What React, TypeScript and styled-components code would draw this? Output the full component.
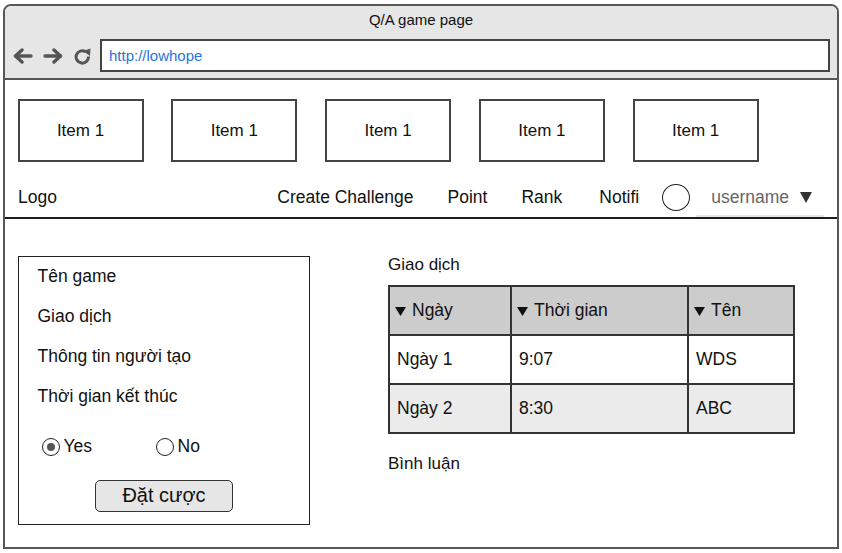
import React from "react";
import styled, { createGlobalStyle } from "styled-components";

const Global = createGlobalStyle`
  * { box-sizing: border-box; }
  html, body { margin: 0; padding: 0; background: #fff; }
  body { font-family: "Liberation Sans", Arial, sans-serif; color: #111; }
`;

const Window = styled.div`
  width: 836px;
  height: 545px;
  margin: 4px 0 0 3px;
  border: 2px solid #575757;
  border-radius: 8px 8px 0 0;
  overflow: hidden;
  display: flex;
  flex-direction: column;
  background: #fff;
`;

const TitleBar = styled.div`
  background: #e6e6e6;
  border-bottom: 2px solid #575757;
  height: 74px;
  padding-top: 6px;
  display: flex;
  flex-direction: column;
`;

const Title = styled.div`
  font-size: 15px;
  line-height: 16px;
  text-align: center;
  color: #111;
`;

const AddressRow = styled.div`
  margin-top: 11px;
  display: flex;
  align-items: center;
  padding: 0 7px 0 8px;
  height: 33px;
`;

const NavIcon = styled.svg<{ $gap: number }>`
  flex: none;
  margin-right: ${(p) => p.$gap}px;
`;

const Address = styled.div`
  flex: 1;
  height: 33px;
  border: 2px solid #454545;
  background: #fff;
  display: flex;
  align-items: center;
  padding-left: 7px;
  font-size: 15px;
  color: #2a72e0;
`;

const Header = styled.div`
  border-bottom: 2px solid #1c1c1c;
  padding: 19px 13px 0 12.5px;
`;

const Items = styled.div`
  display: flex;
  gap: 27.8px;
`;

const ItemBox = styled.div`
  width: 126px;
  height: 63px;
  border: 2px solid #444;
  display: flex;
  align-items: center;
  justify-content: center;
  font-size: 17px;
  padding-top: 1px;
`;

const NavRow = styled.div`
  margin-top: 15px;
  height: 40px;
  display: flex;
  align-items: center;
  font-size: 17.5px;
  padding-top: 1px;
`;

const Logo = styled.div`
  margin-left: 0.5px;
`;

const NavGroup = styled.div`
  margin-left: auto;
  display: flex;
  align-items: center;
  align-self: stretch;
`;

const NavLink = styled.div<{ $gap: number }>`
  margin-right: ${(p) => p.$gap}px;
  white-space: nowrap;
`;

const Avatar = styled.div`
  width: 28px;
  height: 27px;
  border-radius: 50%;
  border: 1.5px solid #222;
  margin-right: 6px;
`;

const UserBlock = styled.div`
  align-self: stretch;
  display: flex;
  align-items: center;
  padding: 2px 12px 0 15px;
  border-bottom: 2px solid #e8e8e8;
  color: #666;
  gap: 11px;
`;

const Caret = styled.svg`
  flex: none;
`;

const Main = styled.div`
  display: flex;
  align-items: flex-start;
  padding: 37px 0 0 13px;
`;

const Panel = styled.div`
  width: 292px;
  height: 269px;
  border: 1.5px solid #222;
  padding: 6.5px 0 0 18.5px;
  display: flex;
  flex-direction: column;
`;

const PanelLabel = styled.div`
  font-size: 17.5px;
  line-height: 24px;
  margin-bottom: 16px;
`;

const RadioRow = styled.div`
  margin-top: 11px;
  padding-left: 4px;
  display: flex;
  align-items: center;
  height: 24px;
  font-size: 17.5px;
`;

const RadioOption = styled.label<{ $width?: number }>`
  display: flex;
  align-items: center;
  gap: 4px;
  width: ${(p) => (p.$width ? `${p.$width}px` : "auto")};
`;

const RadioCircle = styled.span<{ $checked?: boolean }>`
  width: 18px;
  height: 18px;
  border-radius: 50%;
  border: 1.5px solid #222;
  display: flex;
  align-items: center;
  justify-content: center;
  &::after {
    content: "";
    display: ${(p) => (p.$checked ? "block" : "none")};
    width: 8px;
    height: 8px;
    border-radius: 50%;
    background: #555;
  }
`;

const ButtonRow = styled.div`
  margin-top: 21px;
  margin-left: -18.5px;
  display: flex;
  justify-content: center;
`;

const BetButton = styled.button`
  width: 138px;
  height: 32px;
  border: 1.5px solid #333;
  border-radius: 5px;
  background: #e6e6e6;
  font-family: "Liberation Sans", Arial, sans-serif;
  font-size: 20px;
  color: #111;
  padding: 0;
`;

const Right = styled.div`
  margin-left: 78px;
  display: flex;
  flex-direction: column;
`;

const SectionLabel = styled.div<{ $top: number }>`
  font-size: 17px;
  line-height: 17px;
  margin-top: ${(p) => p.$top}px;
`;

const Grid = styled.div`
  margin-top: 12px;
  display: grid;
  grid-template-columns: 122px 177px 106px;
  border-top: 2px solid #333;
  border-left: 2px solid #333;
  width: 407px;
`;

const Cell = styled.div<{ $bg: string; $head?: boolean }>`
  height: 49px;
  border-right: 2px solid #333;
  border-bottom: 2px solid #333;
  background: ${(p) => p.$bg};
  display: flex;
  align-items: center;
  padding: 0 0 1px ${(p) => (p.$head ? 5 : 7)}px;
  font-size: 17.5px;
  gap: 6px;
`;

const SortIcon = styled.svg`
  flex: none;
  margin-top: 3px;
`;

const BackIcon = ({ flip = false }: { flip?: boolean }) => (
  <NavIcon $gap={10} width="20" height="16" viewBox="0 0 20 16">
    <g
      transform={flip ? "translate(20,0) scale(-1,1)" : undefined}
      fill="none"
      stroke="#555"
      strokeWidth="3.4"
      strokeLinecap="round"
      strokeLinejoin="round"
    >
      <path d="M2.5 8 H18" />
      <path d="M9 2 L2.5 8 L9 14" />
    </g>
  </NavIcon>
);

const ReloadIcon = () => (
  <NavIcon $gap={8} width="19" height="18" viewBox="0 0 19 18">
    <path
      d="M15.5 9.5 A6.2 6.2 0 1 1 12.5 4.6"
      fill="none"
      stroke="#555"
      strokeWidth="3"
      strokeLinecap="butt"
    />
    <polygon points="10,4 17.5,1.5 17,9" fill="#555" />
  </NavIcon>
);

const Sort = () => (
  <SortIcon width="11" height="9" viewBox="0 0 11 9">
    <polygon points="0,0 11,0 5.5,9" fill="#111" />
  </SortIcon>
);

const rows = [
  { bg: "#fff", cells: ["Ngày 1", "9:07", "WDS"] },
  { bg: "#ebebeb", cells: ["Ngày 2", "8:30", "ABC"] },
];

export default function App() {
  return (
    <>
      <Global />
      <Window>
        <TitleBar>
          <Title>Q/A game page</Title>
          <AddressRow>
            <BackIcon />
            <BackIcon flip />
            <ReloadIcon />
            <Address>http://lowhope</Address>
          </AddressRow>
        </TitleBar>
        <Header>
          <Items>
            {Array.from({ length: 5 }).map((_, i) => (
              <ItemBox key={i}>Item 1</ItemBox>
            ))}
          </Items>
          <NavRow>
            <Logo>Logo</Logo>
            <NavGroup>
              <NavLink $gap={34}>Create Challenge</NavLink>
              <NavLink $gap={34}>Point</NavLink>
              <NavLink $gap={37}>Rank</NavLink>
              <NavLink $gap={23}>Notifi</NavLink>
              <Avatar />
              <UserBlock>
                <span>username</span>
                <Caret width="12" height="11" viewBox="0 0 12 11">
                  <polygon points="0,0 12,0 6,11" fill="#333" />
                </Caret>
              </UserBlock>
            </NavGroup>
          </NavRow>
        </Header>
        <Main>
          <Panel>
            <PanelLabel>Tên game</PanelLabel>
            <PanelLabel>Giao dịch</PanelLabel>
            <PanelLabel>Thông tin người tạo</PanelLabel>
            <PanelLabel>Thời gian kết thúc</PanelLabel>
            <RadioRow>
              <RadioOption $width={114}>
                <RadioCircle $checked />
                Yes
              </RadioOption>
              <RadioOption>
                <RadioCircle />
                No
              </RadioOption>
            </RadioRow>
            <ButtonRow>
              <BetButton>Đặt cược</BetButton>
            </ButtonRow>
          </Panel>
          <Right>
            <SectionLabel $top={0}>Giao dịch</SectionLabel>
            <Grid>
              {["Ngày", "Thời gian", "Tên"].map((h) => (
                <Cell key={h} $bg="#cccccc" $head>
                  <Sort />
                  {h}
                </Cell>
              ))}
              {rows.map((r) =>
                r.cells.map((c, i) => (
                  <Cell key={r.cells[0] + i} $bg={r.bg}>
                    {c}
                  </Cell>
                ))
              )}
            </Grid>
            <SectionLabel $top={21}>Bình luận</SectionLabel>
          </Right>
        </Main>
      </Window>
    </>
  );
}
